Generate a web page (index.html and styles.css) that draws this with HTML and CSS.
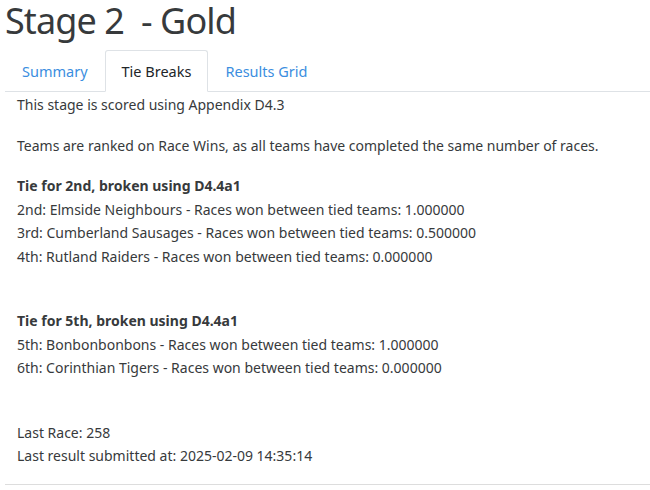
FILE: index.html
```html
<!DOCTYPE html>
<html>
<head>
<meta charset="utf-8">
<link rel="stylesheet" href="styles.css">
</head>
<body>
<div class="page">
  <h1 class="title">Stage 2&nbsp; - Gold</h1>
  <ul class="tabs">
    <li class="tab"><a href="#">Summary</a></li>
    <li class="tab active"><a href="#">Tie Breaks</a></li>
    <li class="tab"><a href="#">Results Grid</a></li>
  </ul>
  <div class="content">
    <p class="line">This stage is scored using Appendix D4.3</p>
    <p class="para">Teams are ranked on Race Wins, as all teams have completed the same number of races.</p>
    <div class="tie">
      <div class="line bold">Tie for 2nd, broken using D4.4a1</div>
      <div class="line">2nd: Elmside Neighbours - Races won between tied teams: 1.000000</div>
      <div class="line">3rd: Cumberland Sausages - Races won between tied teams: 0.500000</div>
      <div class="line">4th: Rutland Raiders - Races won between tied teams: 0.000000</div>
    </div>
    <div class="tie">
      <div class="line bold">Tie for 5th, broken using D4.4a1</div>
      <div class="line">5th: Bonbonbonbons - Races won between tied teams: 1.000000</div>
      <div class="line">6th: Corinthian Tigers - Races won between tied teams: 0.000000</div>
    </div>
    <div class="footer-info">
      <div class="line">Last Race: 258</div>
      <div class="line">Last result submitted at: 2025-02-09 14:35:14</div>
    </div>
  </div>
  <hr class="rule">
</div>
</body>
</html>
```
FILE: styles.css
```css
html, body {
  margin: 0;
  padding: 0;
  background: #fff;
}
body {
  font-family: "Noto Sans", "Open Sans", sans-serif;
  color: #373a3c;
  font-size: 14px;
}
.page {
  padding: 0 0 0 5px;
}
.title {
  margin: 0;
  font-weight: 400;
  font-size: 36px;
  line-height: 42px;
  color: #373a3c;
  letter-spacing: -0.9px;
}
.tabs {
  list-style: none;
  margin: 8px 0 0 0;
  padding: 0;
  display: flex;
  border-bottom: 1px solid #dee2e6;
}
.tab {
  margin-bottom: -1px;
}
.tab a {
  display: block;
  padding: 0 16px;
  height: 40px;
  line-height: 40px;
  border: 1px solid transparent;
  border-radius: 3px 3px 0 0;
  color: #3b8ee0;
  text-decoration: none;
  font-size: 14.5px;
}
.tab.active a {
  color: #212529;
  border-color: #dee2e6 #dee2e6 #fff;
  background: #fff;
}
.content {
  padding: 1px 12px 0 12px;
}
.line {
  margin: 0;
  line-height: 23.5px;
}
.para {
  margin: 17px 0 17px;
  line-height: 23.5px;
}
.bold {
  font-weight: 700;
}
.tie {
  margin-bottom: 41px;
}
.rule {
  margin: 16px 0 0 0;
  border: 0;
  border-top: 1px solid #ddd;
}
```
